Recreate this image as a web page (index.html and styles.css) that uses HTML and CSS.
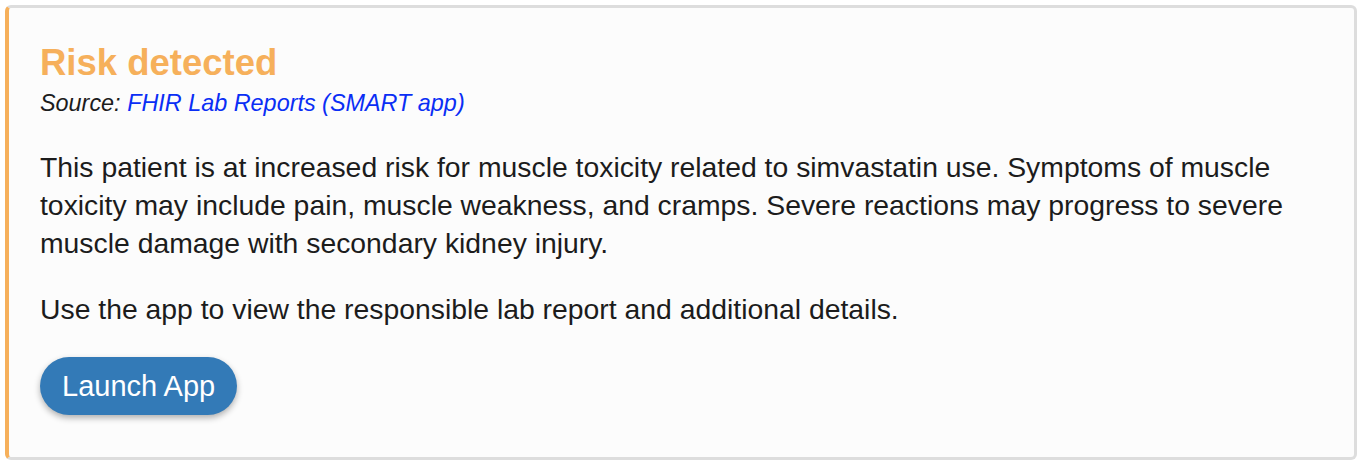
FILE: index.html
```html
<!DOCTYPE html>
<html lang="en">
<head>
<meta charset="utf-8">
<title>Risk detected</title>
<link rel="stylesheet" href="styles.css">
</head>
<body>
<div class="card">
  <h1 class="card-title">Risk detected</h1>
  <div class="card-source">Source: <a class="source-link" href="#">FHIR Lab Reports (SMART app)</a></div>
  <p class="card-text">This patient is at increased risk for muscle toxicity related to simvastatin use. Symptoms of muscle toxicity may include pain, muscle weakness, and cramps. Severe reactions may progress to severe muscle damage with secondary kidney injury.</p>
  <p class="card-text">Use the app to view the responsible lab report and additional details.</p>
  <button class="launch-btn" type="button">Launch App</button>
</div>
</body>
</html>
```

FILE: styles.css
```css
html, body {
  margin: 0;
  padding: 0;
  background: #ffffff;
}
body {
  font-family: "Liberation Sans", Arial, Helvetica, sans-serif;
  color: #1c1c1c;
}
.card {
  margin: 5px;
  height: 455px;
  box-sizing: border-box;
  background: #fcfcfc;
  border: 3px solid #dddddd;
  border-left: 4px solid #f6b05b;
  border-radius: 6px;
  padding: 35px 40px 0 31px;
}
.card-title {
  margin: 0;
  font-size: 36.5px;
  font-weight: bold;
  color: #f6b05b;
  line-height: 40px;
}
.card-source {
  margin-top: 9px;
  font-size: 23.4px;
  font-style: italic;
  line-height: 23px;
  color: #1c1c1c;
}
.source-link {
  color: #0a2ef5;
  text-decoration: none;
}
.card-text {
  margin: 33px 0 0;
  font-size: 28.35px;
  line-height: 38px;
}
.card-text + .card-text {
  margin-top: 28px;
}
.launch-btn {
  margin-top: 29px;
  display: block;
  height: 58px;
  padding: 0 22px;
  border: none;
  border-radius: 29px;
  background: #337ab7;
  color: #ffffff;
  font-family: "Liberation Sans", Arial, Helvetica, sans-serif;
  font-size: 29px;
  box-shadow: 0 3px 6px rgba(0, 0, 0, 0.3);
  cursor: pointer;
}
```
